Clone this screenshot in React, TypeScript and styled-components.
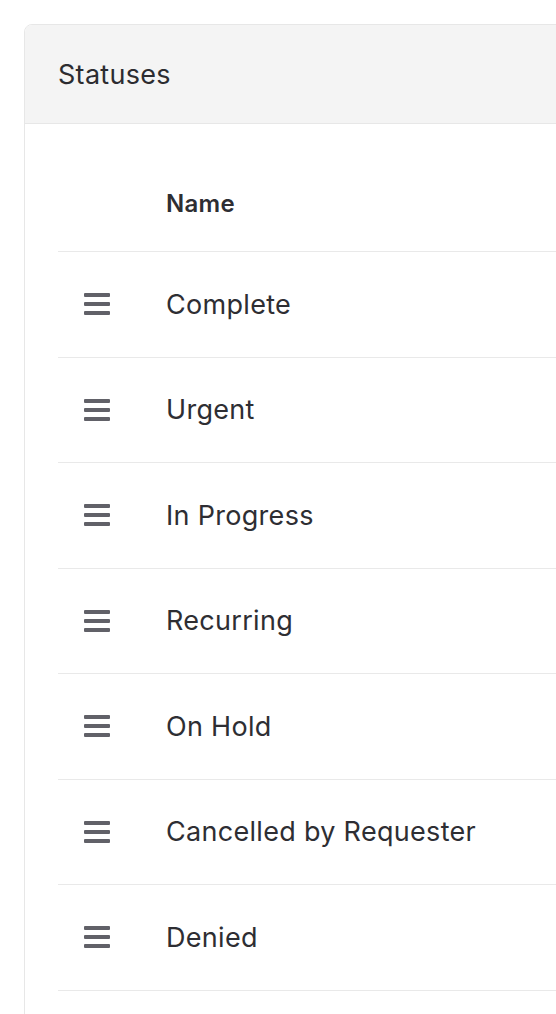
import React from 'react';
import styled, { createGlobalStyle } from 'styled-components';

const Global = createGlobalStyle`
  html, body {
    margin: 0;
    padding: 0;
    background: #ffffff;
    overflow: hidden;
    font-family: Inter, "Noto Sans", sans-serif;
  }
`;

const Page = styled.div`
  padding: 24px 0 0 24px;
  width: 900px;
`;

const Card = styled.section`
  border: 1px solid #e7e7e7;
  border-radius: 8px;
  background: #fff;
  overflow: hidden;
  min-height: 1100px;
`;

const CardHeader = styled.header`
  height: 98px;
  display: flex;
  align-items: center;
  padding-left: 33px;
  background: #f4f4f4;
  border-bottom: 1px solid #e7e7e7;
  h2 {
    margin: 0;
    font-size: 27px;
    letter-spacing: 0.3px;
    font-weight: 400;
    color: #2c2c30;
  }
`;

const Body = styled.div`
  padding: 32px 0 0 33px;
`;

const Row = styled.div<{ $head?: boolean }>`
  display: grid;
  grid-template-columns: 108px 1fr;
  align-items: center;
  height: ${p => (p.$head ? '95px' : '104.5px')};
  border-bottom: 1px solid #e9e9e9;
  color: #2e2e33;
  font-size: ${p => (p.$head ? '24px' : '27px')};
  font-weight: ${p => (p.$head ? 600 : 400)};
  letter-spacing: 0.3px;
`;

const Handle = styled.span`
  display: flex;
  flex-direction: column;
  gap: 5px;
  width: 26px;
  margin-left: 26px;
  i {
    display: block;
    height: 4px;
    border-radius: 1px;
    background: #616168;
  }
`;

const statuses = [
  'Complete',
  'Urgent',
  'In Progress',
  'Recurring',
  'On Hold',
  'Cancelled by Requester',
  'Denied',
];

const App: React.FC = () => (
  <Page>
    <Global />
    <Card>
      <CardHeader>
        <h2>Statuses</h2>
      </CardHeader>
      <Body>
        <Row $head>
          <span />
          <span>Name</span>
        </Row>
        {statuses.map(s => (
          <Row key={s}>
            <Handle>
              <i />
              <i />
              <i />
            </Handle>
            <span>{s}</span>
          </Row>
        ))}
      </Body>
    </Card>
  </Page>
);

export default App;
